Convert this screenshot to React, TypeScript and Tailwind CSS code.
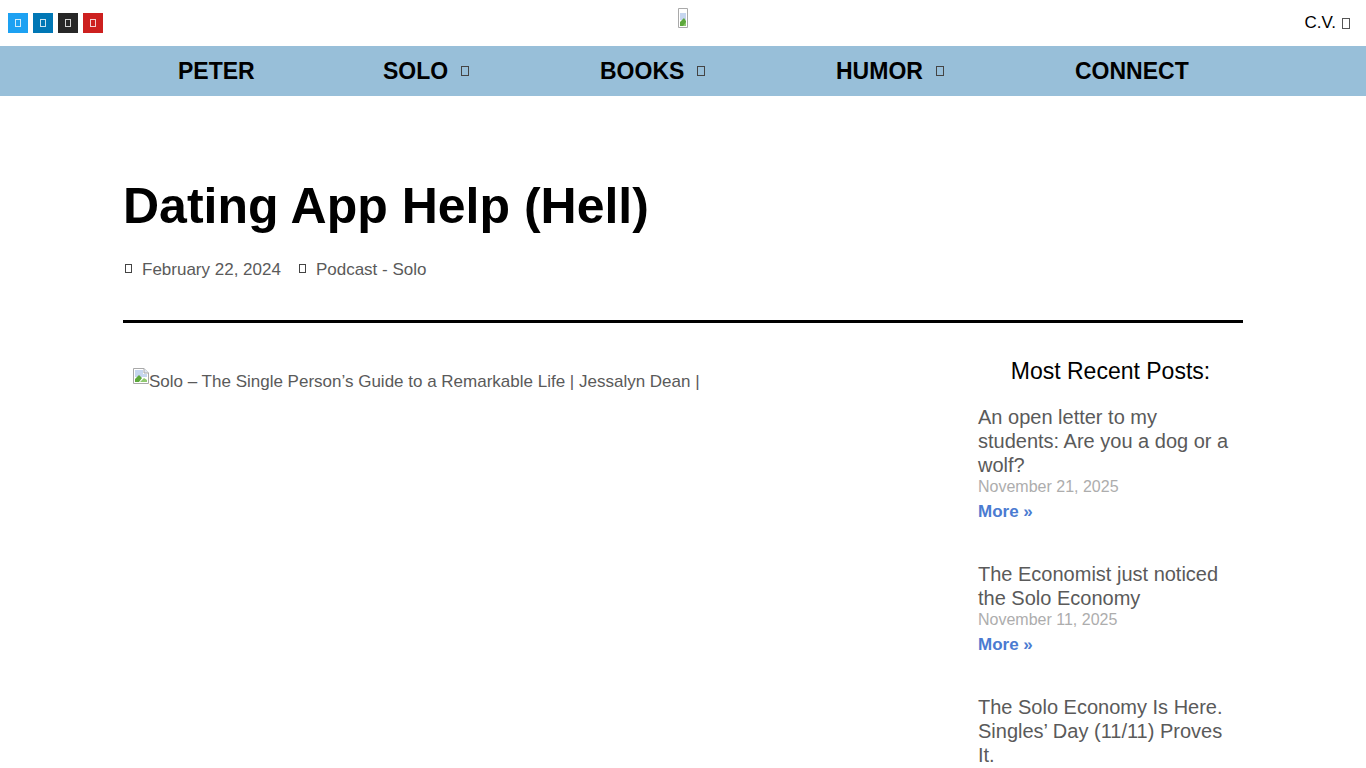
const sans = { fontFamily: '"Liberation Sans", Arial, sans-serif' };

// the icon font is missing in the picture, so each icon is an empty box
function Tofu({ className = "" }: { className?: string }) {
  return <span className={"inline-block shrink-0 border " + className} />;
}

function BrokenImage() {
  return (
    <svg width="16" height="16" viewBox="0 0 16 16" className="-mt-px shrink-0">
      <path d="M0.5 0.5H11L15.5 5V15.5H0.5Z" fill="#fff" stroke="#a9a9a9" />
      <path d="M11 0.5V5H15.5" fill="#dfe8f5" stroke="#a9a9a9" />
      <path d="M2 2H10V6H14V9L2 9Z" fill="#c6d6ef" />
      <path d="M2 14V11L6 7L9 10L6 14Z" fill="#5da83c" />
      <path d="M7 14L11 10L14 12V14Z" fill="#8fc96f" />
    </svg>
  );
}

function BrokenLogo() {
  return (
    <svg width="10" height="20" viewBox="0 0 10 20" className="shrink-0">
      <path d="M0.5 0.5H9.5V19.5H0.5Z" fill="#fff" stroke="#a9a9a9" />
      <path d="M2 5H8V12H2Z" fill="#c6d6ef" />
      <path d="M2 18V14L6 10L8 13V18Z" fill="#5da83c" />
      <path d="M5 18L8 14V18Z" fill="#8fc96f" />
    </svg>
  );
}

const nav = [
  { label: "PETER", w: "w-[205px]", caret: false },
  { label: "SOLO", w: "w-[217px]", caret: true },
  { label: "BOOKS", w: "w-[236px]", caret: true },
  { label: "HUMOR", w: "w-[239px]", caret: true },
  { label: "CONNECT", w: "w-[115px]", caret: false },
];

const posts = [
  { title: "An open letter to my students: Are you a dog or a wolf?", date: "November 21, 2025" },
  { title: "The Economist just noticed the Solo Economy", date: "November 11, 2025" },
  { title: "The Solo Economy Is Here. Singles’ Day (11/11) Proves It.", date: "" },
];

export default function App() {
  return (
    <div className="h-[768px] overflow-hidden bg-white" style={sans}>
      <header className="flex h-[46px] items-start pl-2 pr-[16px]">
        <div className="mt-[13px] flex w-[670px] gap-[5px]">
          {["bg-[#1da1f2]", "bg-[#0077b5]", "bg-[#272727]", "bg-[#cd201f]"].map((c) => (
            <span key={c} className={"flex h-5 w-5 items-center justify-center " + c}>
              <Tofu className="h-2 w-[6px] border-white/80" />
            </span>
          ))}
        </div>
        <div className="mt-2">
          <BrokenLogo />
        </div>
        <a className="ml-auto mt-[13px] flex items-center gap-[6px] whitespace-nowrap text-[17px] leading-[20px] text-black">
          C.V.
          <Tofu className="h-[11px] w-2 border-[#555]" />
        </a>
      </header>

      <nav className="flex h-[50px] items-center bg-[#98bfd9] pl-[178px] text-[23px] font-bold text-black">
        {nav.map((item) => (
          <a key={item.label} className={"flex items-center gap-[13px] " + item.w}>
            <span className="whitespace-nowrap">{item.label}</span>
            {item.caret && <Tofu className="h-[10px] w-2 border-[#444]" />}
          </a>
        ))}
      </nav>

      <main className="mx-[123px] w-[1120px]">
        <h1 className="mt-[79px] text-[50px] font-bold leading-[62px] text-black">Dating App Help (Hell)</h1>
        <div className="mt-[20px] flex items-center text-[17px] leading-[26px] text-[#5a5a5a]">
          <Tofu className="mb-[3px] ml-[2px] mr-[10px] h-[9px] w-[7px] border-[#444]" />
          <span>February 22, 2024</span>
          <Tofu className="mb-[3px] ml-[18px] mr-[10px] h-[9px] w-[7px] border-[#444]" />
          <span>Podcast - Solo</span>
        </div>
        <div className="mt-[37px] h-[3px] bg-black" />

        <div className="mt-[34px] flex">
          <div className="flex w-[855px] pl-[10px] pt-[12px] text-[17px] leading-[26px] text-[#5a5a5a]">
            <span className="flex items-start">
              <BrokenImage />
              <span className="whitespace-nowrap">Solo – The Single Person’s Guide to a Remarkable Life | Jessalyn Dean |</span>
            </span>
          </div>
          <aside className="w-[265px]">
            <h2 className="text-center text-[23px] leading-[28px] text-black">Most Recent Posts:</h2>
            <div className="mt-[20px] flex flex-col gap-[40px] pr-[10px]">
              {posts.map((p) => (
                <article key={p.title}>
                  <h3 className="text-[20px] leading-[24px] text-[#5a5a5a]">{p.title}</h3>
                  {p.date && <div className="text-[16px] leading-[20px] text-[#adadad]">{p.date}</div>}
                  {p.date && <a className="mt-[5px] block text-[17px] font-bold leading-[20px] text-[#4b7bd1]">More »</a>}
                </article>
              ))}
            </div>
          </aside>
        </div>
      </main>
    </div>
  );
}
